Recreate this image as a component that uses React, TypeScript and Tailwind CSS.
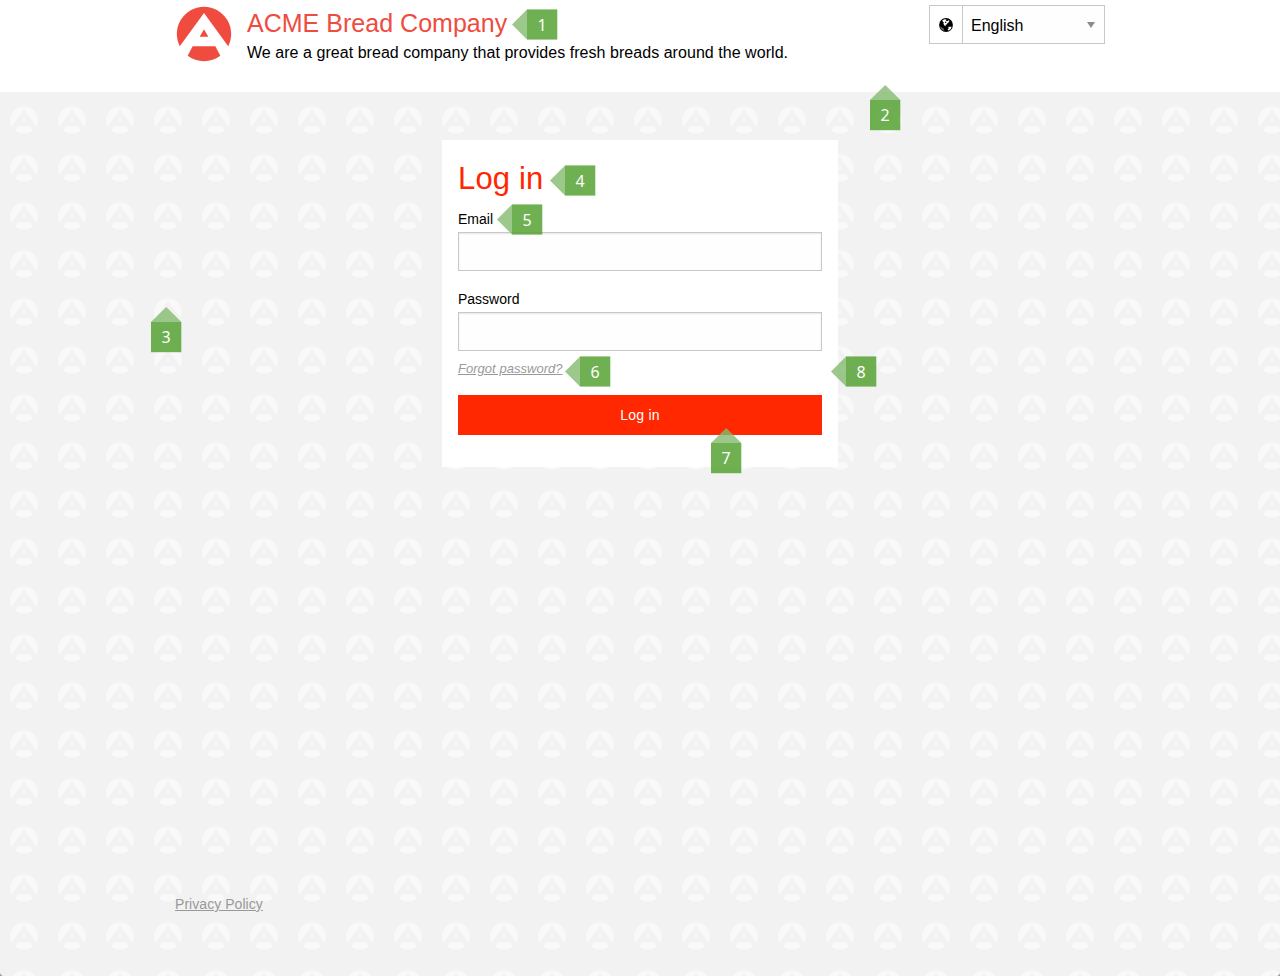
import React from "react";

const SANS = "font-['Liberation_Sans',Arial,sans-serif]";

function Mark() {
  return (
    <>
      <path d="M-72.6 37A81.5 81.5 0 1 1 72.6 37L0 -63Z" />
      <path d="M0 -14L-13 8H13Z" />
      <path d="M-34 37H34L49 65A81.5 81.5 0 0 1 -49 65Z" />
    </>
  );
}

function Globe() {
  return (
    <svg width="14" height="14" viewBox="0 0 14 14">
      <circle cx="7" cy="7" r="6.9" fill="#000" />
      <path
        d="M3.4 2.2L5.6 1.2L7.6 1.4L6.8 2.6L8.4 3.2L9.4 2.2L10.4 2.8L9.6 4.4L8.4 5.2L8 6.4L6.8 6.6L6.6 8.2L5.4 7.6L4.4 5.8L4.8 4.2L3.6 3.6Z"
        fill="#fff"
      />
      <path d="M9.4 8.8L12.7 8.8L11.6 11.2L9.4 12.6L8.6 11.4L9.6 10.4Z" fill="#fff" />
      <path d="M0.9 8.6L2.9 9.6L4.6 10.6L5.4 12.8L3.2 11.9L1.6 10.2Z" fill="#fff" fillOpacity="0.4" />
      <path d="M6.2 3.6L7.6 4L7 5L5.9 4.8Z" fill="#000" />
    </svg>
  );
}

function Backdrop() {
  return (
    <svg className="absolute inset-0 h-full w-full" aria-hidden="true">
      <defs>
        <pattern id="marks" width="48" height="48" patternUnits="userSpaceOnUse" y="4">
          <g transform="translate(24 24) scale(0.17)" fill="#f9f9f9">
            <Mark />
          </g>
        </pattern>
      </defs>
      <rect width="100%" height="100%" fill="url(#marks)" />
      <path d="M0 881V884H3Q0.5 883.5 0 881Z" fill="#999" />
      <path d="M1280 881V884H1277Q1279.5 883.5 1280 881Z" fill="#999" />
    </svg>
  );
}

function Callout({ n, up = false, place }: { n: number; up?: boolean; place: string }) {
  return (
    <div className={`absolute ${up ? "h-[46px] w-[31px] pt-[14px] pr-px pb-[2px]" : "h-[31px] w-[46px] pl-[15px] pr-px"} ${place}`}>
      {up ? (
        <svg width="31" height="46" viewBox="0 0 31 46" className="absolute inset-0">
          <path d="M0 15L15.2 0L30.4 15Z" fill="#84ba6e" fillOpacity="0.8" />
          <path d="M0 15H30.3V45.2H0Z" fill="#56a234" fillOpacity="0.85" />
        </svg>
      ) : (
        <svg width="46" height="31" viewBox="0 0 46 31" className="absolute inset-0">
          <path d="M15 0.4L0 15.5L15 30.6Z" fill="#84ba6e" fillOpacity="0.8" />
          <path d="M15 0.4H45.3V30.6H15Z" fill="#56a234" fillOpacity="0.85" />
        </svg>
      )}
      <div className="relative flex h-[30px] items-center justify-center pt-px font-['Noto_Sans',sans-serif] text-[16px] leading-none text-white">
        {n}
      </div>
    </div>
  );
}

function Field({ label, type }: { label: string; type: string }) {
  return (
    <label className="block">
      <span className="block h-[21px] text-[14px] leading-[21px]">{label}</span>
      <input
        type={type}
        className="mt-[2px] block h-[39px] w-full border border-[#c8c8c8] bg-[#fefefe] px-2 shadow-[inset_0_1px_2px_rgba(0,0,0,0.1)] outline-none"
      />
    </label>
  );
}

export default function App() {
  return (
    <div className={`relative flex h-[976px] w-[1280px] flex-col overflow-hidden bg-white text-black ${SANS}`}>
      <header className="flex h-[92px] shrink-0 justify-between pr-[175px] pl-[176px]">
        <div className="flex">
          <svg className="mt-[6px] h-[56px] w-[56px]" viewBox="-84 -84 168 168" fill="#f04b3f">
            <Mark />
          </svg>
          <div className="ml-[15px] pt-[7px]">
            <h1 className="text-[25px] leading-[32px] tracking-[0.02px] whitespace-nowrap text-[#f04b3f]">
              ACME Bread Company
            </h1>
            <p className="mt-[2px] text-[16px] leading-[24px] tracking-[0.045px] whitespace-nowrap">
              We are a great bread company that provides fresh breads around the world.
            </p>
          </div>
        </div>
        <div className="mt-[5px] flex h-[39px] w-[176px] border border-[#c8c8c8]">
          <div className="flex w-[33px] items-center justify-center border-r border-[#c8c8c8] pt-px">
            <Globe />
          </div>
          <div className="flex flex-1 items-center justify-between bg-[#fefefe] pr-[9px] pl-[8px] text-[16px]">
            <span className="pt-[2px]">English</span>
            <svg width="8" height="6" viewBox="0 0 8 6">
              <path d="M0 0H8L4 6Z" fill="#8a8a8a" />
            </svg>
          </div>
        </div>
      </header>

      <div className="relative flex flex-1 flex-col items-center bg-[#f2f2f2]">
        <Backdrop />
        <main className="relative mt-[48px] h-[327px] w-[396px] bg-white px-[16px] pt-[17px]">
          <h2 className="h-[44px] text-[31px] leading-[44px] tracking-[0.15px] text-[#ff2600]">Log in</h2>
          <div className="mt-[8px]">
            <Field label="Email" type="text" />
          </div>
          <div className="mt-[18px]">
            <Field label="Password" type="password" />
          </div>
          <a
            href="#forgot"
            className="mt-[8px] block h-[20px] w-fit text-[13px] leading-[20px] tracking-[0.03px] text-[#999] italic underline"
          >
            Forgot password?
          </a>
          <button className="mt-[16px] block h-[40px] w-full bg-[#ff2800] text-[14px] tracking-[0.25px] text-white">
            Log in
          </button>
        </main>
        <footer className="relative mt-auto mb-[62px] w-[930px]">
          <a href="#privacy" className="block w-fit text-[14px] leading-[20px] tracking-[0.05px] text-[#999] underline">
            Privacy Policy
          </a>
        </footer>
      </div>

      <Callout n={1} place="left-[512px] top-[9px]" />
      <Callout n={2} up place="left-[870px] top-[85px]" />
      <Callout n={3} up place="left-[151px] top-[307px]" />
      <Callout n={4} place="left-[550px] top-[165px]" />
      <Callout n={5} place="left-[497px] top-[204px]" />
      <Callout n={6} place="left-[565px] top-[356px]" />
      <Callout n={7} up place="left-[711px] top-[428px]" />
      <Callout n={8} place="left-[831px] top-[356px]" />
    </div>
  );
}
